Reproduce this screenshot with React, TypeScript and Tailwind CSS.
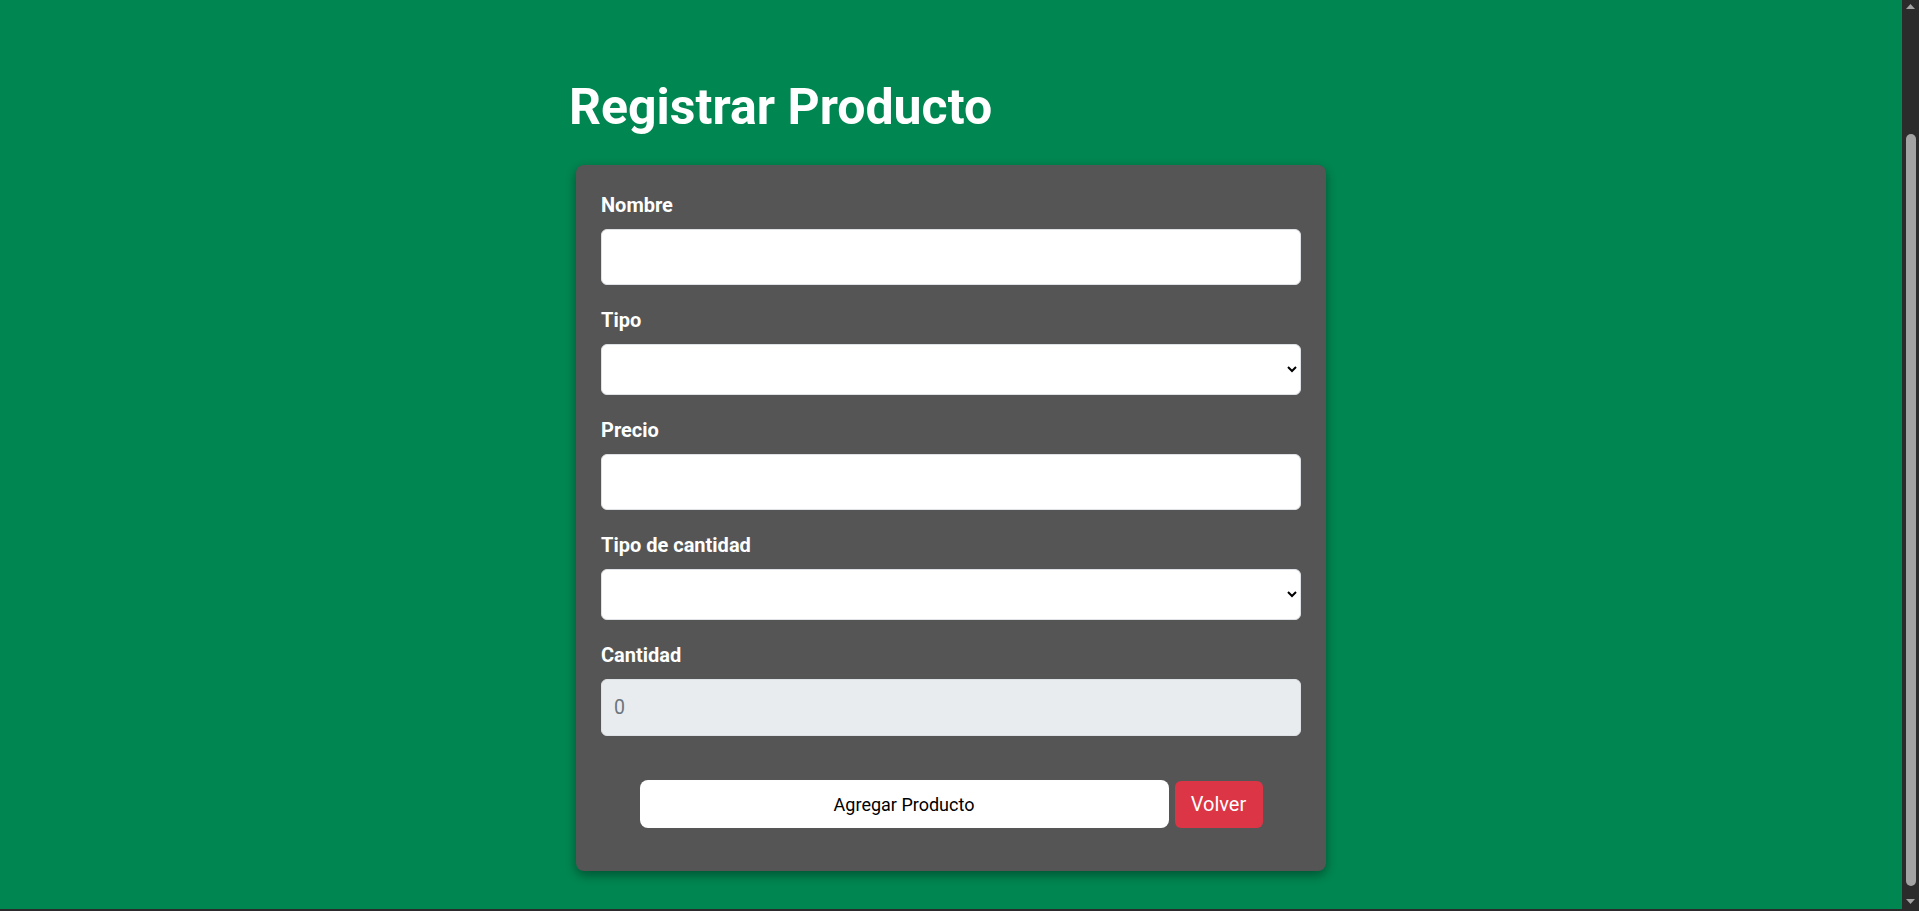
import React from 'react';

const fields: { label: string; kind: 'input' | 'select' | 'disabled' }[] = [
  { label: 'Nombre', kind: 'input' },
  { label: 'Tipo', kind: 'select' },
  { label: 'Precio', kind: 'input' },
  { label: 'Tipo de cantidad', kind: 'select' },
  { label: 'Cantidad', kind: 'disabled' },
];

const Field: React.FC<{ label: string; kind: 'input' | 'select' | 'disabled'; first?: boolean }> = ({ label, kind, first }) => (
  <div className={first ? '' : 'mt-[23px]'}>
    <label className="block text-[20px] font-bold leading-[24px] text-white mb-[12px]">{label}</label>
    {kind === 'input' && (
      <input
        type="text"
        className="block w-full h-[56px] rounded-[6px] border border-[#dee2e6] bg-white px-3 text-[19px] text-black outline-none"
      />
    )}
    {kind === 'select' && (
      <select className="block w-full h-[51px] rounded-[6px] border border-[#dee2e6] bg-white pl-3 pr-[6px] text-[19px] text-black outline-none">
        <option value=""></option>
      </select>
    )}
    {kind === 'disabled' && (
      <input
        type="number"
        disabled
        placeholder="0"
        className="block w-full h-[57px] rounded-[6px] border border-[#dee2e6] bg-[#e9ecef] px-3 text-[19.5px] text-[#6c757d] placeholder:text-[#6c757d] outline-none"
      />
    )}
  </div>
);

// barra de desplazamiento como en la captura
const ScrollBar = () => (
  <div className="flex w-[17px] flex-col bg-[#2b2b2b]">
    <div className="flex h-[17px] items-start justify-center pt-[4px]">
      <svg width="9" height="5" viewBox="0 0 9 5">
        <path d="M0 5 L4.5 0 L9 5 Z" fill="#a3a3a3" />
      </svg>
    </div>
    <div className="flex flex-1 justify-center pt-[117px] pb-[8px]">
      <div className="w-[10px] rounded-full bg-[#a3a3a3]" />
    </div>
    <div className="flex h-[17px] items-end justify-center pb-[7px]">
      <svg width="9" height="5" viewBox="0 0 9 5">
        <path d="M0 0 L4.5 5 L9 0 Z" fill="#a3a3a3" />
      </svg>
    </div>
  </div>
);

export default function App() {
  return (
    <div className="flex h-[911px] w-full overflow-hidden font-['Roboto','Liberation_Sans',sans-serif]">
      <div className="flex flex-1 flex-col">
        <main className="flex flex-1 flex-col items-center bg-[#008751] pt-[77px]">
          <div className="w-[750px]">
            <h1 className="-ml-[7px] text-[50px] font-bold leading-[60px] text-white">Registrar Producto</h1>
            <form
              className="mt-[28px] rounded-[8px] bg-[#555555] px-[25px] pt-[28px] pb-[43px] shadow-[0_4px_12px_rgba(0,0,0,0.4)]"
              onSubmit={(e) => e.preventDefault()}
            >
              {fields.map((f, i) => (
                <Field key={f.label} label={f.label} kind={f.kind} first={i === 0} />
              ))}
              <div className="mt-[44px] flex items-center justify-center gap-[6px]">
                <button
                  type="submit"
                  className="h-[48px] w-[529px] rounded-[8px] bg-white text-[18px] text-black"
                >
                  Agregar Producto
                </button>
                <button
                  type="button"
                  className="h-[47px] w-[88px] rounded-[6px] bg-[#dc3545] text-[20px] text-white"
                >
                  Volver
                </button>
              </div>
            </form>
          </div>
        </main>
        <div className="h-[2px] bg-[#2b2b2b]" />
      </div>
      <ScrollBar />
    </div>
  );
}
